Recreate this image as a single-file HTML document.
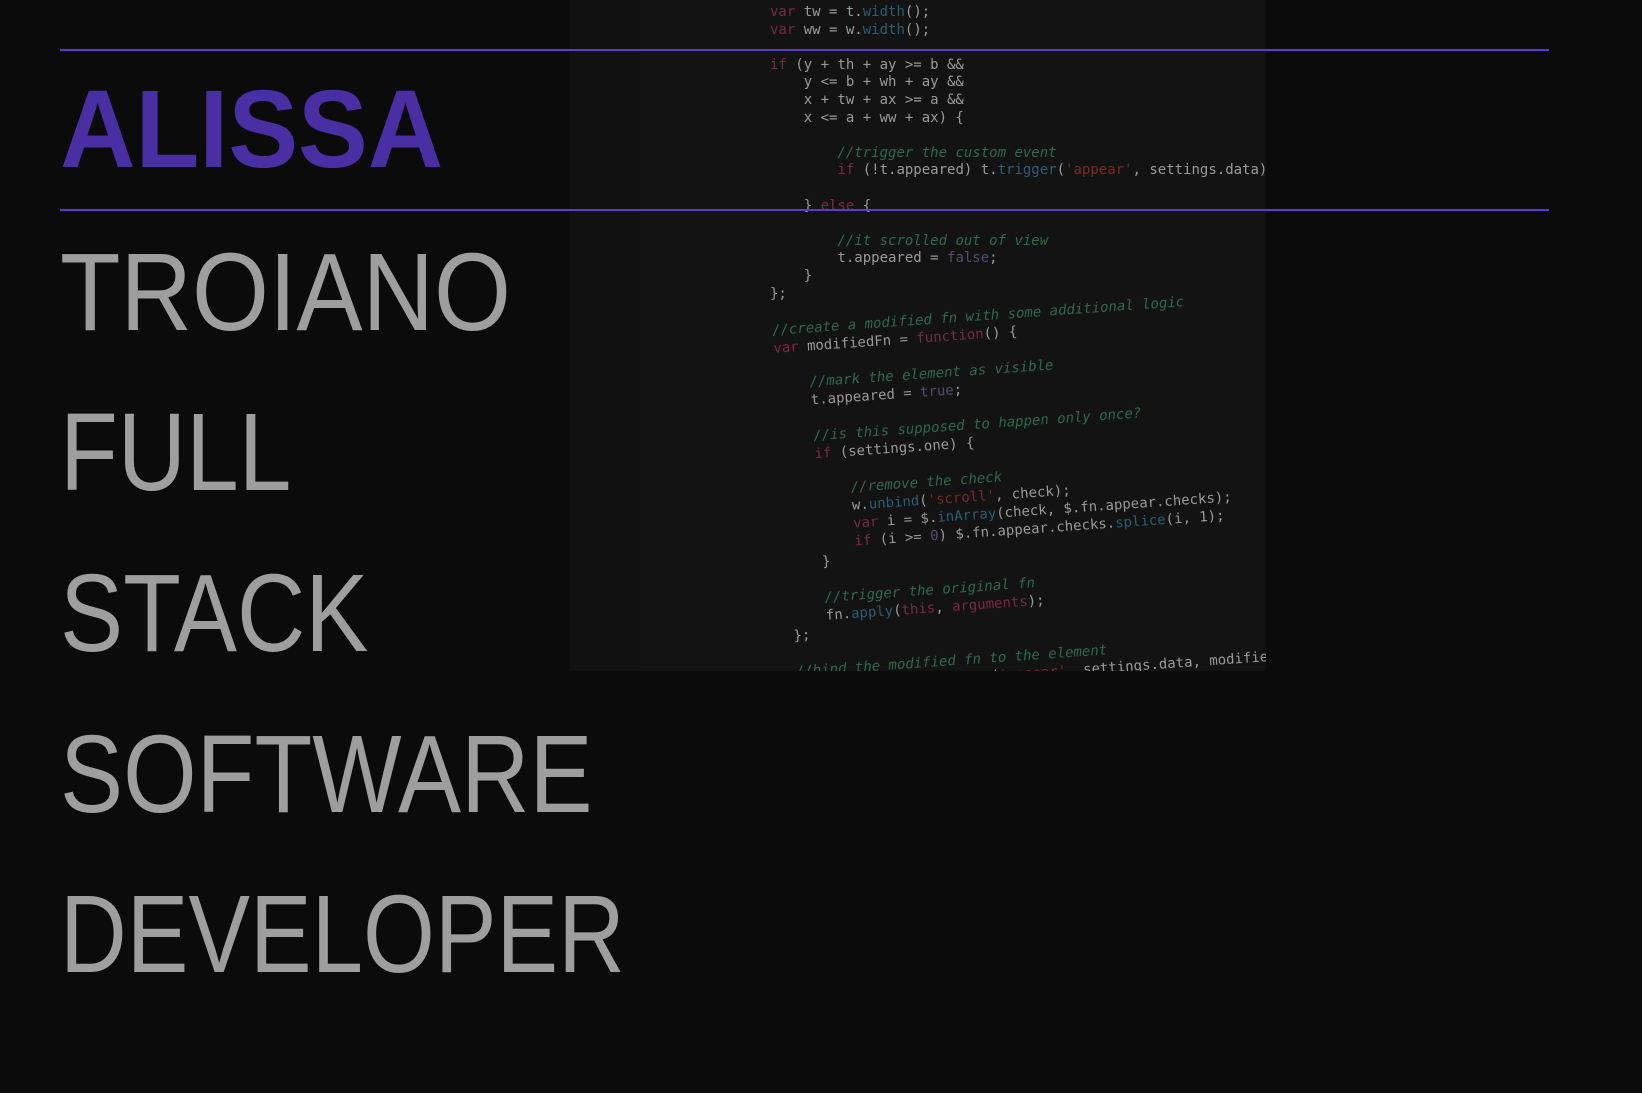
<!DOCTYPE html>
<html><head><meta charset="utf-8"><style>
html,body{margin:0;padding:0;background:#0b0b0b;width:1642px;height:1093px;overflow:hidden;position:relative;font-family:"Liberation Sans",sans-serif}
.code{position:absolute;left:570px;top:0;width:696px;height:671px;background:#131313;overflow:hidden;font-family:"DejaVu Sans Mono","Liberation Mono",monospace;font-size:14px;color:#9a9a9a}
.gut{position:absolute;left:0;top:0;width:70px;height:100%;background:#111}
.c{position:absolute;white-space:pre;line-height:17px}
.k{color:#7a2a44}.f{color:#2d5d70}.s{color:#7a2a22}.m{color:#2f6a4a;font-style:italic}.p{color:#5a4a70}
.rot{position:absolute;left:0;top:0;transform-origin:200px 300px;transform:rotate(-4deg)}
.line{position:absolute;left:60px;width:1489px;height:2px;background:#5a3ccf}
.t{position:absolute;left:60px;font-size:110px;line-height:110px;white-space:nowrap;transform-origin:0 0;color:#9e9e9e}
.b{font-weight:bold;color:#4a2ea3}
</style></head><body>
<div class="code">
<div class="gut"></div>
<div class="c" style="left:200px;top:4px;line-height:17.6px"><span class="k">var</span> tw = t.<span class="f">width</span>();
<span class="k">var</span> ww = w.<span class="f">width</span>();

<span class="k">if</span> (y + th + ay >= b &amp;&amp;
    y &lt;= b + wh + ay &amp;&amp;
    x + tw + ax >= a &amp;&amp;
    x &lt;= a + ww + ax) {

        <span class="m">//trigger the custom event</span>
        <span class="k">if</span> (!t.appeared) t.<span class="f">trigger</span>(<span class="s">'appear'</span>, settings.data);

    } <span class="k">else</span> {

        <span class="m">//it scrolled out of view</span>
        t.appeared = <span class="p">false</span>;
    }
};</div>
<div class="rot"><div class="c" style="left:200px;top:322px;line-height:18px"><span class="m">//create a modified fn with some additional logic</span>
<span class="k">var</span> modifiedFn = <span class="k">function</span>() {

    <span class="m">//mark the element as visible</span>
    t.appeared = <span class="p">true</span>;

    <span class="m">//is this supposed to happen only once?</span>
    <span class="k">if</span> (settings.one) {

        <span class="m">//remove the check</span>
        w.<span class="f">unbind</span>(<span class="s">'scroll'</span>, check);
        <span class="k">var</span> i = $.<span class="f">inArray</span>(check, $.fn.appear.checks);
        <span class="k">if</span> (i >= <span class="p">0</span>) $.fn.appear.checks.<span class="f">splice</span>(i, 1);
    }

    <span class="m">//trigger the original fn</span>
    fn.<span class="f">apply</span>(<span class="k">this</span>, <span class="k">arguments</span>);
};

<span class="m">//bind the modified fn to the element</span>
<span class="k">if</span> (settings.one) t.<span class="f">one</span>(<span class="s">'appear'</span>, settings.data, modifiedFn);</div></div>
</div>
<div class="line" style="top:49px"></div>
<div class="line" style="top:209px"></div>
<div class="t b" style="top:75px;transform:scaleX(0.95)">ALISSA</div>
<div class="t" style="top:238px;transform:scaleX(0.9)">TROIANO</div>
<div class="t" style="top:398px;transform:scaleX(0.86)">FULL</div>
<div class="t" style="top:559px;transform:scaleX(0.86)">STACK</div>
<div class="t" style="top:720px;transform:scaleX(0.86)">SOFTWARE</div>
<div class="t" style="top:880px;transform:scaleX(0.84)">DEVELOPER</div>
</body></html>
